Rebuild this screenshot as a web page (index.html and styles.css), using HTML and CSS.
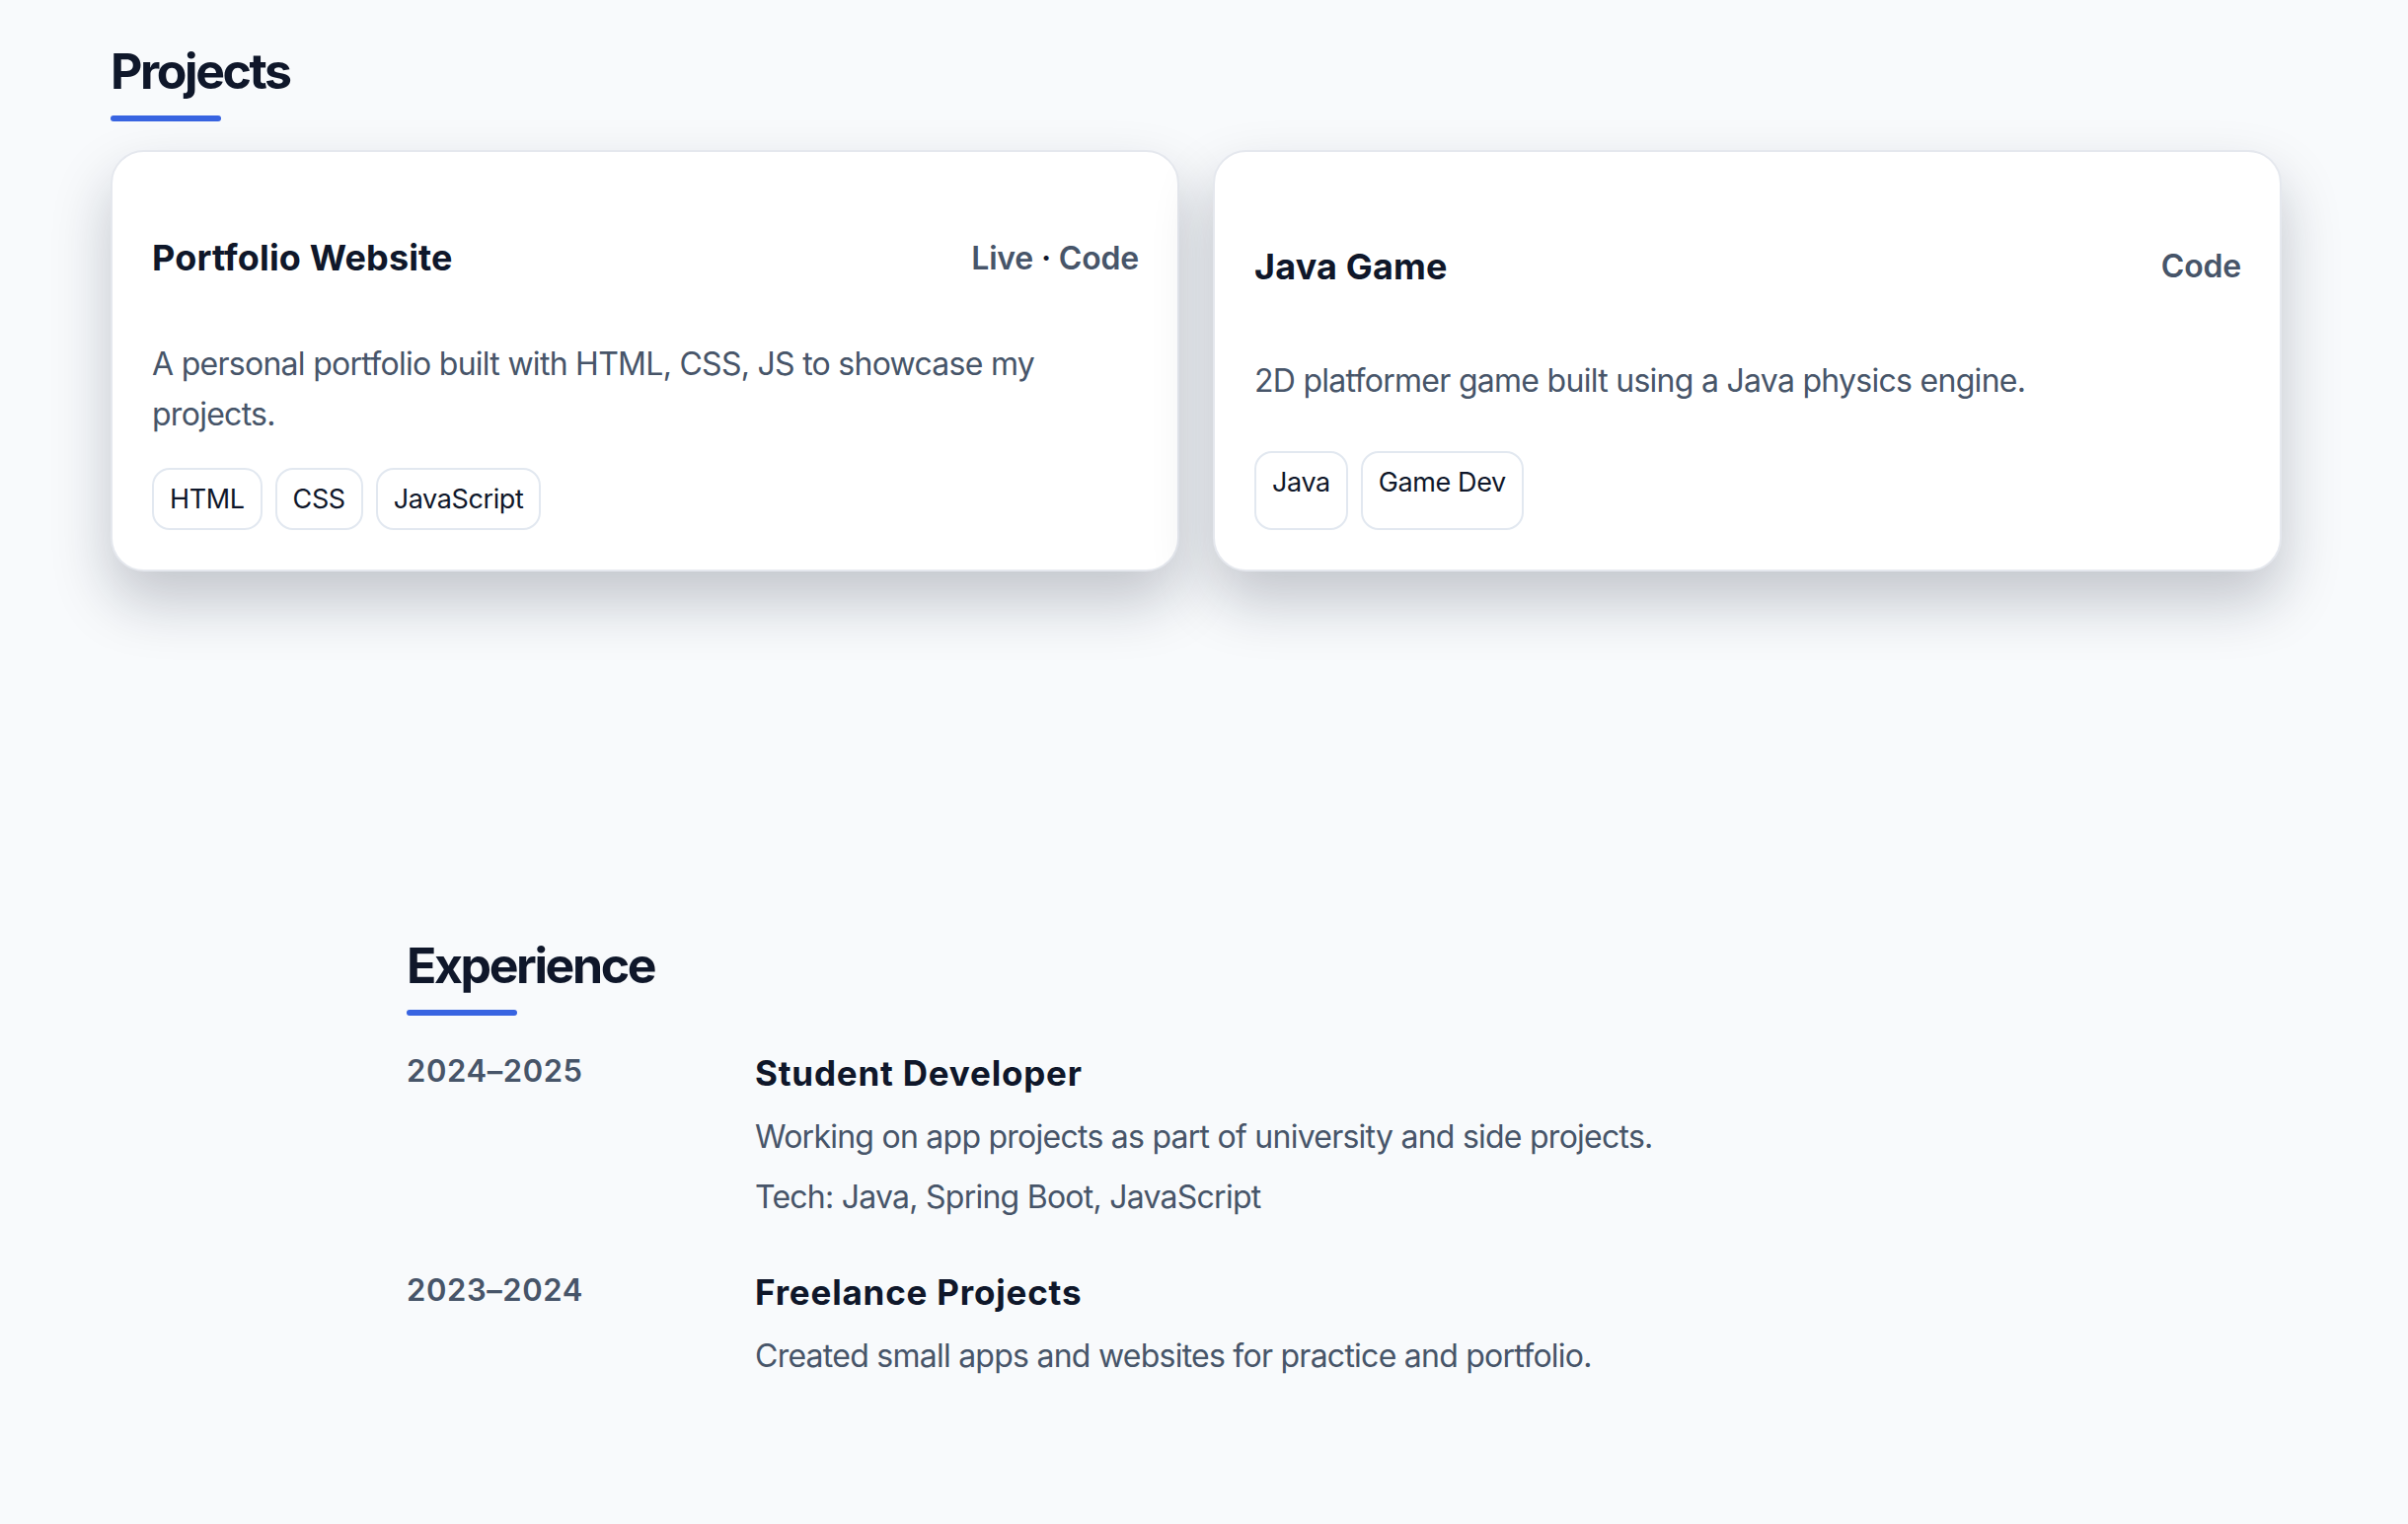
FILE: index.html
```html
<!DOCTYPE html>
<html lang="en">
<head>
<meta charset="utf-8">
<title>Projects &amp; Experience</title>
<link rel="stylesheet" href="styles.css">
</head>
<body>
<main class="page">
  <section class="projects">
    <h2 class="section-title">Projects</h2>
    <div class="title-bar"></div>
    <div class="cards">
      <article class="card">
        <div class="card-head">
          <h3 class="card-title">Portfolio Website</h3>
          <div class="card-links"><a class="link">Live</a> <span class="sep">·</span> <a class="link">Code</a></div>
        </div>
        <p class="card-desc">A personal portfolio built with HTML, CSS, JS to showcase my projects.</p>
        <div class="tags">
          <span class="tag">HTML</span>
          <span class="tag">CSS</span>
          <span class="tag">JavaScript</span>
        </div>
      </article>
      <article class="card">
        <div class="card-head">
          <h3 class="card-title">Java Game</h3>
          <div class="card-links"><a class="link">Code</a></div>
        </div>
        <p class="card-desc">2D platformer game built using a Java physics engine.</p>
        <div class="tags">
          <span class="tag">Java</span>
          <span class="tag">Game Dev</span>
        </div>
      </article>
    </div>
  </section>

  <section class="experience">
    <h2 class="section-title">Experience</h2>
    <div class="title-bar"></div>
    <div class="timeline">
      <div class="entry">
        <div class="entry-date">2024–2025</div>
        <div class="entry-body">
          <h4 class="entry-title">Student Developer</h4>
          <p class="entry-text">Working on app projects as part of university and side projects.</p>
          <p class="entry-text">Tech: Java, Spring Boot, JavaScript</p>
        </div>
      </div>
      <div class="entry">
        <div class="entry-date">2023–2024</div>
        <div class="entry-body">
          <h4 class="entry-title">Freelance Projects</h4>
          <p class="entry-text">Created small apps and websites for practice and portfolio.</p>
        </div>
      </div>
    </div>
  </section>
</main>
</body>
</html>
```

FILE: styles.css
```css
* { box-sizing: border-box; }

html, body {
  margin: 0;
  padding: 0;
  background: #f8fafc;
}

body {
  font-family: "Inter", "Noto Sans", "Liberation Sans", sans-serif;
  color: #0f172a;
  min-height: 1544px;
}

.page {
  display: block;
}

.projects {
  padding: 42px 128px 0 112px;
}

.section-title {
  margin: 0;
  font-size: 50px;
  line-height: 60px;
  font-weight: 700;
  letter-spacing: -2.4px;
  color: #0f172a;
}

.title-bar {
  width: 112px;
  height: 6px;
  margin-top: 15px;
  border-radius: 3px;
  background: #3864e1;
}

.cards {
  margin-top: 29px;
  display: grid;
  grid-template-columns: 1fr 1fr;
  gap: 34px;
}

.card {
  background: #ffffff;
  border: 2px solid #e5e8ee;
  border-radius: 34px;
  padding: 85px 39px 40px 40px;
  display: grid;
  grid-template-rows: auto auto auto;
  box-shadow: 0 30px 60px rgba(15, 23, 42, 0.23);
}

.card-head {
  display: flex;
  justify-content: space-between;
  align-items: center;
}

.card-title {
  margin: 0;
  font-size: 36px;
  line-height: 44px;
  font-weight: 700;
  letter-spacing: 0.15px;
  color: #0f172a;
}

.card-links {
  font-size: 32px;
  line-height: 39px;
  font-weight: 600;
  letter-spacing: -0.2px;
  color: #0f172a;
}

.link {
  color: #475569;
  text-decoration: none;
}

.sep {
  color: #0f172a;
}

.card-desc {
  margin: 60px 0 29px;
  font-size: 32px;
  line-height: 51px;
  color: #475569;
  letter-spacing: -0.72px;
}

.tags {
  display: flex;
  gap: 13px;
}

.tag {
  padding: 12px 16px;
  border: 2px solid #e2e8f0;
  border-radius: 18px;
  background: #ffffff;
  font-size: 27px;
  line-height: 35px;
  letter-spacing: -0.4px;
  color: #0f172a;
}

.experience {
  max-width: 1616px;
  margin: 0 auto;
  padding-top: 369px;
}

.timeline {
  margin-top: 38px;
  display: flex;
  flex-direction: column;
  gap: 51px;
}

.entry {
  display: grid;
  grid-template-columns: 353px 1fr;
  align-items: start;
}

.entry-date {
  font-size: 31px;
  line-height: 36px;
  font-weight: 600;
  letter-spacing: 0.6px;
  color: #475569;
}

.entry-title {
  margin: 0;
  font-size: 35px;
  line-height: 41px;
  font-weight: 700;
  letter-spacing: 0.8px;
  color: #0f172a;
}

.entry-text {
  margin: 10px 0 0;
  font-size: 32px;
  line-height: 51px;
  color: #475569;
  letter-spacing: -0.75px;
}

.entry-title + .entry-text {
  margin-top: 18px;
}
```
